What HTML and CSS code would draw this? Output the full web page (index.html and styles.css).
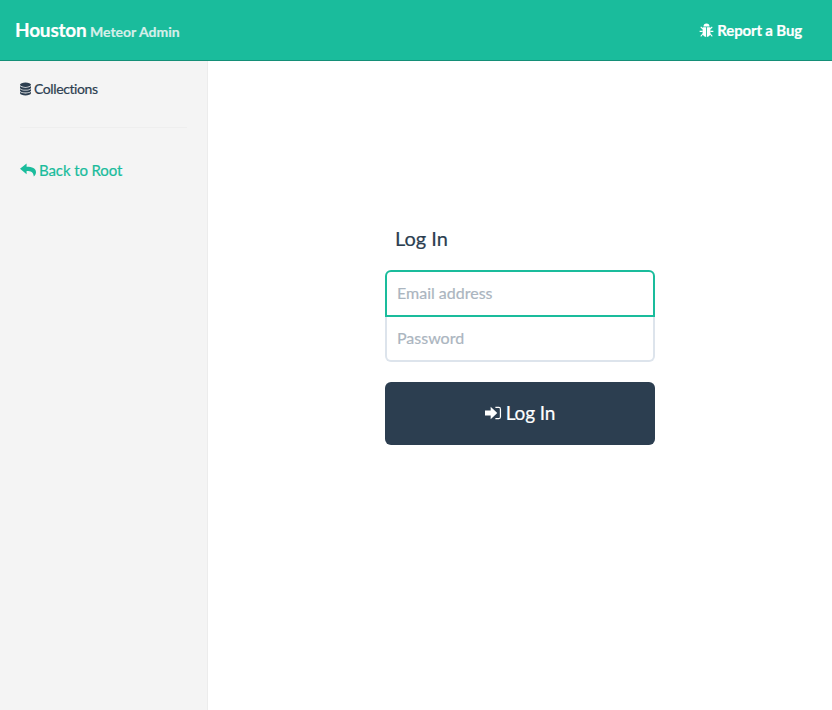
FILE: index.html
```html
<!DOCTYPE html>
<html lang="en">
<head>
<meta charset="utf-8">
<title>Houston Meteor Admin</title>
<link rel="stylesheet" href="styles.css">
</head>
<body>
<header class="navbar">
  <a class="brand" href="#">Houston <small>Meteor Admin</small></a>
  <a class="report" href="#">
    <svg class="icon icon-bug" viewBox="0 0 14 14" aria-hidden="true"><path d="M4.200 3.200a2.800 2.800 0 0 1 5.600 0zM3.400 4h3.200v9a3.600 3.600 0 0 1-3.200-3.400zM7.400 4h3.200v5.600A3.600 3.600 0 0 1 7.400 13z"/><path class="leg" d="M3.600 5.600 1.600 3.600M10.400 5.600l2-2M3.400 7.800H.6M10.600 7.800h2.800M3.800 10l-2.200 2.400M10.200 10l2.200 2.400"/></svg>
    Report a Bug
  </a>
</header>
<div class="layout">
  <aside class="sidebar">
    <a class="collections" href="#">
      <svg class="icon icon-db" viewBox="0 0 12 14" aria-hidden="true"><ellipse cx="6" cy="2.400" rx="6" ry="2.400"/><path d="M0 3.800C1 5.200 3.400 5.600 6 5.600s5-.4 6-1.800v2C11.600 7.200 9 7.800 6 7.800S.4 7.200 0 5.800zM0 6.900C1 8.300 3.400 8.700 6 8.700s5-.4 6-1.800v2C11.600 10.300 9 10.900 6 10.900S.4 10.300 0 8.900zM0 10C1 11.400 3.400 11.800 6 11.800s5-.4 6-1.800v1.600C11.600 13 9 14 6 14s-5.600-1-6-2.400z"/></svg>
      Collections
    </a>
    <hr class="divider">
    <a class="back" href="#">
      <svg class="icon icon-reply" viewBox="0 0 16 14" aria-hidden="true"><path d="M6.600 .4 0 5.800l6.600 5.400V7.900c4.400 0 6.800.8 7.200 5.700 1.500-1.500 2.200-3 2.200-4.400C16 5.200 12.200 3.800 6.600 3.700z"/></svg>
      Back to Root
    </a>
  </aside>
  <main class="content">
    <form class="login">
      <h3 class="title">Log In</h3>
      <div class="fields">
        <input class="field field-email" type="text" placeholder="Email address">
        <input class="field field-password" type="password" placeholder="Password">
      </div>
      <button class="submit" type="button">
        <svg class="icon icon-signin" viewBox="0 0 18 15" aria-hidden="true"><path d="M0 4.800h6V1L13 7.500 6 14v-3.800H0z"/><path d="M11 1h3.600A2.400 2.400 0 0 1 17 3.400v8.200a2.400 2.400 0 0 1-2.400 2.400H11v-1.300h3.400c.9 0 1.300-.5 1.300-1.300V3.600c0-.8-.4-1.300-1.300-1.300H11z"/></svg>
        Log In
      </button>
    </form>
  </main>
</div>
</body>
</html>
```
FILE: styles.css
```css
* { box-sizing: border-box; }
html, body { height: 100%; }
body {
  margin: 0;
  font-family: Lato, "Liberation Sans", sans-serif;
  color: #34495e;
  background: #fff;
  display: flex;
  flex-direction: column;
  -webkit-text-stroke: 0.2px currentColor;
}
a { text-decoration: none; }
.icon { display: inline-block; fill: currentColor; flex: none; }
.navbar {
  height: 61px;
  flex: none;
  background: #1abc9c;
  border-bottom: 1px solid #148f77;
  display: flex;
  align-items: center;
  justify-content: space-between;
  padding: 0 30px 0 15px;
}
.brand { color: #fff; font-size: 19px; font-weight: 700; letter-spacing: -0.2px; margin-bottom: 2px; word-spacing: -1px; }
.brand small { font-size: 14px; color: #d5efe9; letter-spacing: 0; word-spacing: 0; }
.report {
  color: #fff;
  font-size: 15px;
  font-weight: 700;
  letter-spacing: -0.15px;
  display: flex;
  align-items: center;
  gap: 3px;
}
.icon-bug { width: 15px; height: 15px; }
.leg { fill: none; stroke: currentColor; stroke-width: 1; }
.layout { flex: 1; display: flex; min-height: 0; }
.sidebar {
  width: 208px;
  flex: none;
  background: #f4f4f4;
  border-right: 1px solid #ececec;
  padding: 19px 20px 0;
}
.collections {
  display: flex;
  align-items: center;
  gap: 3px;
  color: #2c3e50;
  font-size: 14px;
  line-height: 17px;
  letter-spacing: -0.4px;
}
.icon-db { width: 11px; height: 14px; }
.divider {
  border: 0;
  border-top: 1px solid #eee;
  margin: 30px 0 0;
  width: 167px;
}
.back {
  display: flex;
  align-items: center;
  gap: 3px;
  margin-top: 32px;
  color: #1abc9c;
  font-size: 15px;
  line-height: 20px;
  letter-spacing: -0.1px;
}
.icon-reply { width: 16px; height: 14px; }
.content { flex: 1; display: flex; justify-content: center; padding-top: 162px; }
.login { width: 270px; }
.title {
  margin: 0 0 17px 10px;
  font-size: 20px;
  line-height: 30px;
  font-weight: 400;
  color: #2c3e50;
}
.fields { display: flex; flex-direction: column; }
.field {
  height: 47px;
  width: 100%;
  padding: 0 10px 2px;
  font: 400 16px Lato, "Liberation Sans", sans-serif;
  background: #fff;
  outline: 0;
}
.field::placeholder { color: #abb5c0; opacity: 1; }
.field-email { border: 2px solid #1abc9c; border-radius: 6px 6px 0 0; }
.field-password {
  height: 45px;
  border: 2px solid #dde4ec;
  border-top: 0;
  border-radius: 0 0 6px 6px;
}
.submit {
  margin-top: 20px;
  width: 100%;
  height: 63px;
  padding: 0 0 2px;
  border: 0;
  border-radius: 6px;
  background: #2c3e50;
  color: #fff;
  font: 400 19px Lato, "Liberation Sans", sans-serif;
  letter-spacing: -0.1px;
  display: flex;
  align-items: center;
  justify-content: center;
  gap: 4px;
}
.icon-signin { width: 17px; height: 16px; }
```
